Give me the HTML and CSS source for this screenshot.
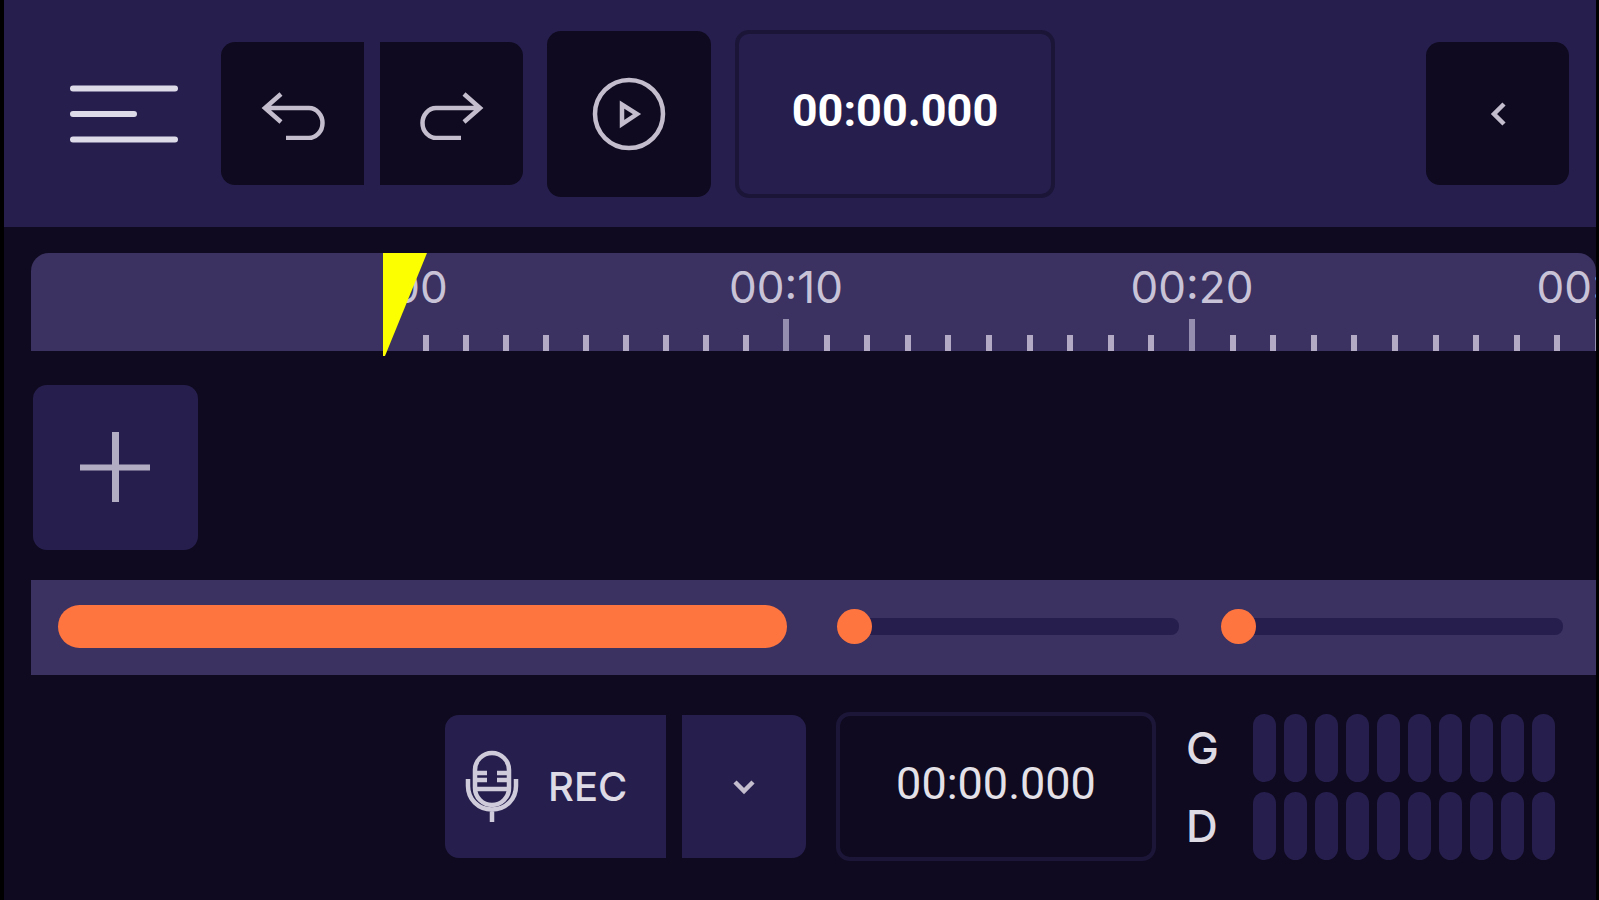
FILE: index.html
```html
<!DOCTYPE html>
<html lang="en">
<head>
<meta charset="utf-8">
<title>Audio editor</title>
<link rel="stylesheet" href="styles.css">
</head>
<body>
<div class="app">
  <header class="toolbar">
    <button class="menu" aria-label="Menu">
      <svg width="112" height="60" viewBox="0 0 112 60" stroke-width="6" stroke-linecap="round"><path d="M6 4.500H108M6 30H67M6 55.500H108"/></svg>
    </button>
    <div class="history">
      <button class="btn dark start" aria-label="Undo">
        <svg width="68" height="52" viewBox="0 0 68 52" stroke-width="4.500"><path d="M22 6L6 20L22 34M6 20H50A13.500 15 0 0 1 50 50H27"/></svg>
      </button>
      <button class="btn dark end" aria-label="Redo">
        <svg width="68" height="52" viewBox="0 0 68 52" stroke-width="4.500"><path d="M46 6L62 20L46 34M62 20H18A13.500 15 0 0 0 18 50H43"/></svg>
      </button>
    </div>
    <button class="btn dark play" aria-label="Play">
      <svg width="76" height="76" viewBox="0 0 76 76" stroke-width="4.500"><circle cx="38" cy="38" r="34"/><path d="M31 28.500V48L46 38Z"/></svg>
    </button>
    <output class="time time-play" aria-label="Playback position">00:00.000</output>
    <button class="btn dark collapse" aria-label="Collapse">
      <svg width="20" height="28" viewBox="0 0 20 28" stroke-width="4.500"><path d="M16 4L6 14L16 24"/></svg>
    </button>
  </header>

  <main>
    <div class="ruler">
      <div class="scale">
        <div class="segment"><span class="label">00:00</span><i></i><i></i><i></i><i></i><i></i><i></i><i></i><i></i><i></i><i></i></div>
        <div class="segment"><span class="label">00:10</span><i></i><i></i><i></i><i></i><i></i><i></i><i></i><i></i><i></i><i></i></div>
        <div class="segment"><span class="label">00:20</span><i></i><i></i><i></i><i></i><i></i><i></i><i></i><i></i><i></i><i></i></div>
        <div class="segment"><span class="label">00:30</span><i></i><i></i><i></i><i></i><i></i><i></i><i></i><i></i><i></i><i></i></div>
      </div>
      <svg class="playhead" width="44" height="103" viewBox="0 0 44 103"><path d="M0 0H44L2 103H0Z"/></svg>
    </div>

    <div class="tracks">
      <button class="btn light add" aria-label="Add track">
        <svg width="73" height="73" viewBox="0 0 73 73"><path stroke-width="7" d="M36.500 1V71"/><path stroke-width="6" d="M1 36.500H71"/></svg>
      </button>
    </div>

    <div class="controls">
      <div class="scrollbar" role="scrollbar" aria-label="Timeline scroll" aria-valuenow="0"></div>
      <input class="range" type="range" min="0" max="100" value="0" aria-label="Horizontal zoom">
      <input class="range" type="range" min="0" max="100" value="0" aria-label="Vertical zoom">
    </div>
  </main>

  <footer class="recorder">
    <div class="history">
      <button class="btn light start rec">
        <svg width="54" height="74" viewBox="0 0 54 74" stroke-width="4.500"><rect x="10" y="3" width="34" height="52" rx="17"/><path d="M10 23H22M10 30H22M32 23H44M32 30H44M10 39H44M3 29V36C3 49 13 59.500 27 59.500S51 49 51 36V29M27 60V72"/></svg>
        <span>REC</span>
      </button>
      <button class="btn light end source" aria-label="Recording source">
        <svg width="26" height="20" viewBox="0 0 26 20" stroke-width="4.500"><path d="M4 5L13 14L22 5"/></svg>
      </button>
    </div>
    <output class="time time-rec" aria-label="Recording time">00:00.000</output>
    <div class="meters">
      <div class="meter"><span class="channel">G</span><div class="bars"><i></i><i></i><i></i><i></i><i></i><i></i><i></i><i></i><i></i><i></i></div></div>
      <div class="meter"><span class="channel">D</span><div class="bars"><i></i><i></i><i></i><i></i><i></i><i></i><i></i><i></i><i></i><i></i></div></div>
    </div>
  </footer>
</div>
</body>
</html>
```
FILE: styles.css
```css
* { box-sizing: border-box; }

:root {
  --night: #0f0a1f;
  --indigo: #261f4e;
  --violet: #3b3261;
  --orange: #ff753f;
  --icon: #c3bdce;
}

html { background: #000; }

body {
  margin: 0;
  min-height: 100vh;
  padding: 0 3px 0 4px;
  display: flex;
  font-family: Inter, "Open Sans", sans-serif;
}

.app {
  flex: 1;
  min-width: 0;
  background: var(--night);
}

svg {
  display: block;
  flex: none;
  fill: none;
  stroke: var(--icon);
}

button {
  margin: 0;
  padding: 0;
  border: 0;
  background: none;
  font: inherit;
  color: inherit;
  cursor: pointer;
}

.toolbar {
  display: flex;
  align-items: center;
  height: 227px;
  padding: 0 27px 0 63px;
  background: var(--indigo);
}

.menu { margin-right: 42px; }
.menu svg { stroke: #dedbe9; }

.btn {
  display: flex;
  align-items: center;
  justify-content: center;
  flex: none;
  width: 143px;
  height: 143px;
  border-radius: 14px;
}

.dark { background: var(--night); }
.light { background: var(--indigo); }
.start { border-radius: 14px 0 0 14px; }
.end { border-radius: 0 14px 14px 0; }

.history {
  display: flex;
  gap: 16px;
}

.play {
  width: 164px;
  height: 166px;
  margin: 0 24px;
}

.collapse { margin-left: auto; }

.time {
  display: flex;
  align-items: center;
  justify-content: center;
  flex: none;
  width: 320px;
  padding-bottom: 6px;
  border: 4px solid;
  border-radius: 14px;
  font-family: Roboto, sans-serif;
  font-size: 45px;
  line-height: 52px;
}

.time-play {
  height: 168px;
  border-color: #1b1538;
  color: #fff;
  font-weight: 700;
}

.time-rec {
  height: 149px;
  margin: 0 30px;
  border-color: #1c1639;
  color: #e4e1e8;
}

.ruler {
  position: relative;
  height: 98px;
  margin: 26px 0 0 27px;
  padding-left: 352px;
  background: var(--violet);
  border-radius: 18px 18px 0 0;
}

.scale {
  display: flex;
  height: 100%;
  overflow: hidden;
}

.segment {
  position: relative;
  display: grid;
  grid-template-columns: repeat(10, 1fr);
  align-items: end;
  flex: none;
  width: 406px;
}

.segment:first-child { width: 400px; }

.segment i {
  width: 6px;
  height: 16px;
  background: #b3abc5;
}

.segment i:first-of-type {
  height: 32px;
  background: #968eae;
}

.segment:first-child i:first-of-type { visibility: hidden; }

.label {
  position: absolute;
  top: 8px;
  left: 3px;
  transform: translateX(-50%);
  font-size: 44px;
  line-height: 52px;
  color: #c9c3d8;
}

.playhead {
  position: absolute;
  top: 0;
  left: 352px;
  fill: #fbff00;
  stroke: none;
}

.tracks { padding: 34px 0 30px 29px; }

.add {
  width: 165px;
  height: 165px;
}

.add svg { stroke: #b3adc4; }

.controls {
  display: flex;
  align-items: center;
  gap: 42px;
  height: 95px;
  margin-left: 27px;
  padding: 0 33px 2px 27px;
  background: var(--violet);
}

.scrollbar {
  flex: 730;
  height: 43px;
  margin-right: 8px;
  border-radius: 22px;
  background: var(--orange);
}

.range {
  flex: 342;
  min-width: 0;
  width: 0;
  height: 35px;
  margin: 0;
  appearance: none;
  background: none;
}

.range::-webkit-slider-runnable-track {
  height: 17px;
  border-radius: 8px;
  background: var(--indigo);
}

.range::-webkit-slider-thumb {
  appearance: none;
  width: 35px;
  height: 35px;
  margin-top: -9px;
  border-radius: 50%;
  background: var(--orange);
}

.recorder {
  display: flex;
  align-items: center;
  justify-content: flex-end;
  padding: 37px 41px 39px 0;
}

.rec {
  justify-content: flex-start;
  gap: 29px;
  width: 221px;
  padding-left: 20px;
  font-size: 40px;
  font-weight: 500;
  color: #dedbe6;
}

.rec svg { stroke: #cfcbdb; }

.source { width: 124px; }

.meters {
  display: grid;
  gap: 10px;
}

.meter {
  display: flex;
  align-items: center;
}

.channel {
  width: 67px;
  font-size: 44px;
  font-weight: 500;
  line-height: 52px;
  color: #dedbe4;
}

.bars {
  display: flex;
  gap: 8px;
}

.bars i {
  width: 23px;
  height: 68px;
  border-radius: 12px;
  background: var(--indigo);
}
```
